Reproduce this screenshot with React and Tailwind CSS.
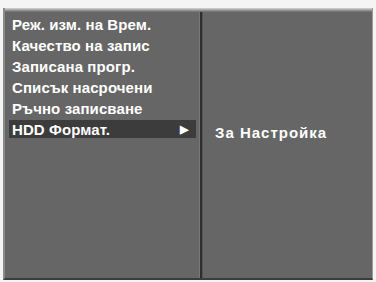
export default function App() {
  const items = [
    "Реж. изм. на Врем.",
    "Качество на запис",
    "Записана прогр.",
    "Списък насрочени",
    "Ръчно записване",
  ];
  return (
    <div
      className="w-[376px] h-[282px] bg-[#f4f4f4] pt-[8px] pb-[2px] pl-[3px] pr-[3px] overflow-hidden"
      style={{ fontFamily: '"Liberation Sans", Arial, sans-serif' }}
    >
      <div className="h-full flex flex-col bg-[#666666] border-l-[2px] border-l-[#8a8a8a] border-b-[2px] border-b-[#3c3c3c] border-r-[1px] border-r-[#9a9a9a]">
        <div className="h-[4px] bg-gradient-to-b from-[#d8d8d8] to-[#6a6a6a]" />
        <div className="flex flex-1">
          <div className="w-[194px] pt-[2px] flex flex-col">
            {items.map((t) => (
              <div
                key={t}
                className="h-[21px] flex items-center pl-[7px] text-white font-bold text-[15px] leading-none tracking-[0.1px]"
              >
                {t}
              </div>
            ))}
            <div className="h-[18px] mt-[1px] flex items-center justify-between pl-[3px] pr-[8px] bg-[#3c3c3c] text-white font-bold text-[15px] leading-none tracking-[0.1px] ml-[4px] mr-[3px]">
              <span>HDD Формат.</span>
              <span className="text-[11px]">▶</span>
            </div>
          </div>
          <div className="w-[4px] flex">
            <div className="w-[1px] bg-[#777]" />
            <div className="w-[2px] bg-[#2e2e2e]" />
            <div className="w-[1px] bg-[#555]" />
          </div>
          <div className="flex-1 flex flex-col">
            <div className="h-[113px]" />
            <div className="pl-[12px] text-white font-bold text-[15px] leading-none tracking-[1px]">
              За Настройка
            </div>
          </div>
        </div>
      </div>
    </div>
  );
}
